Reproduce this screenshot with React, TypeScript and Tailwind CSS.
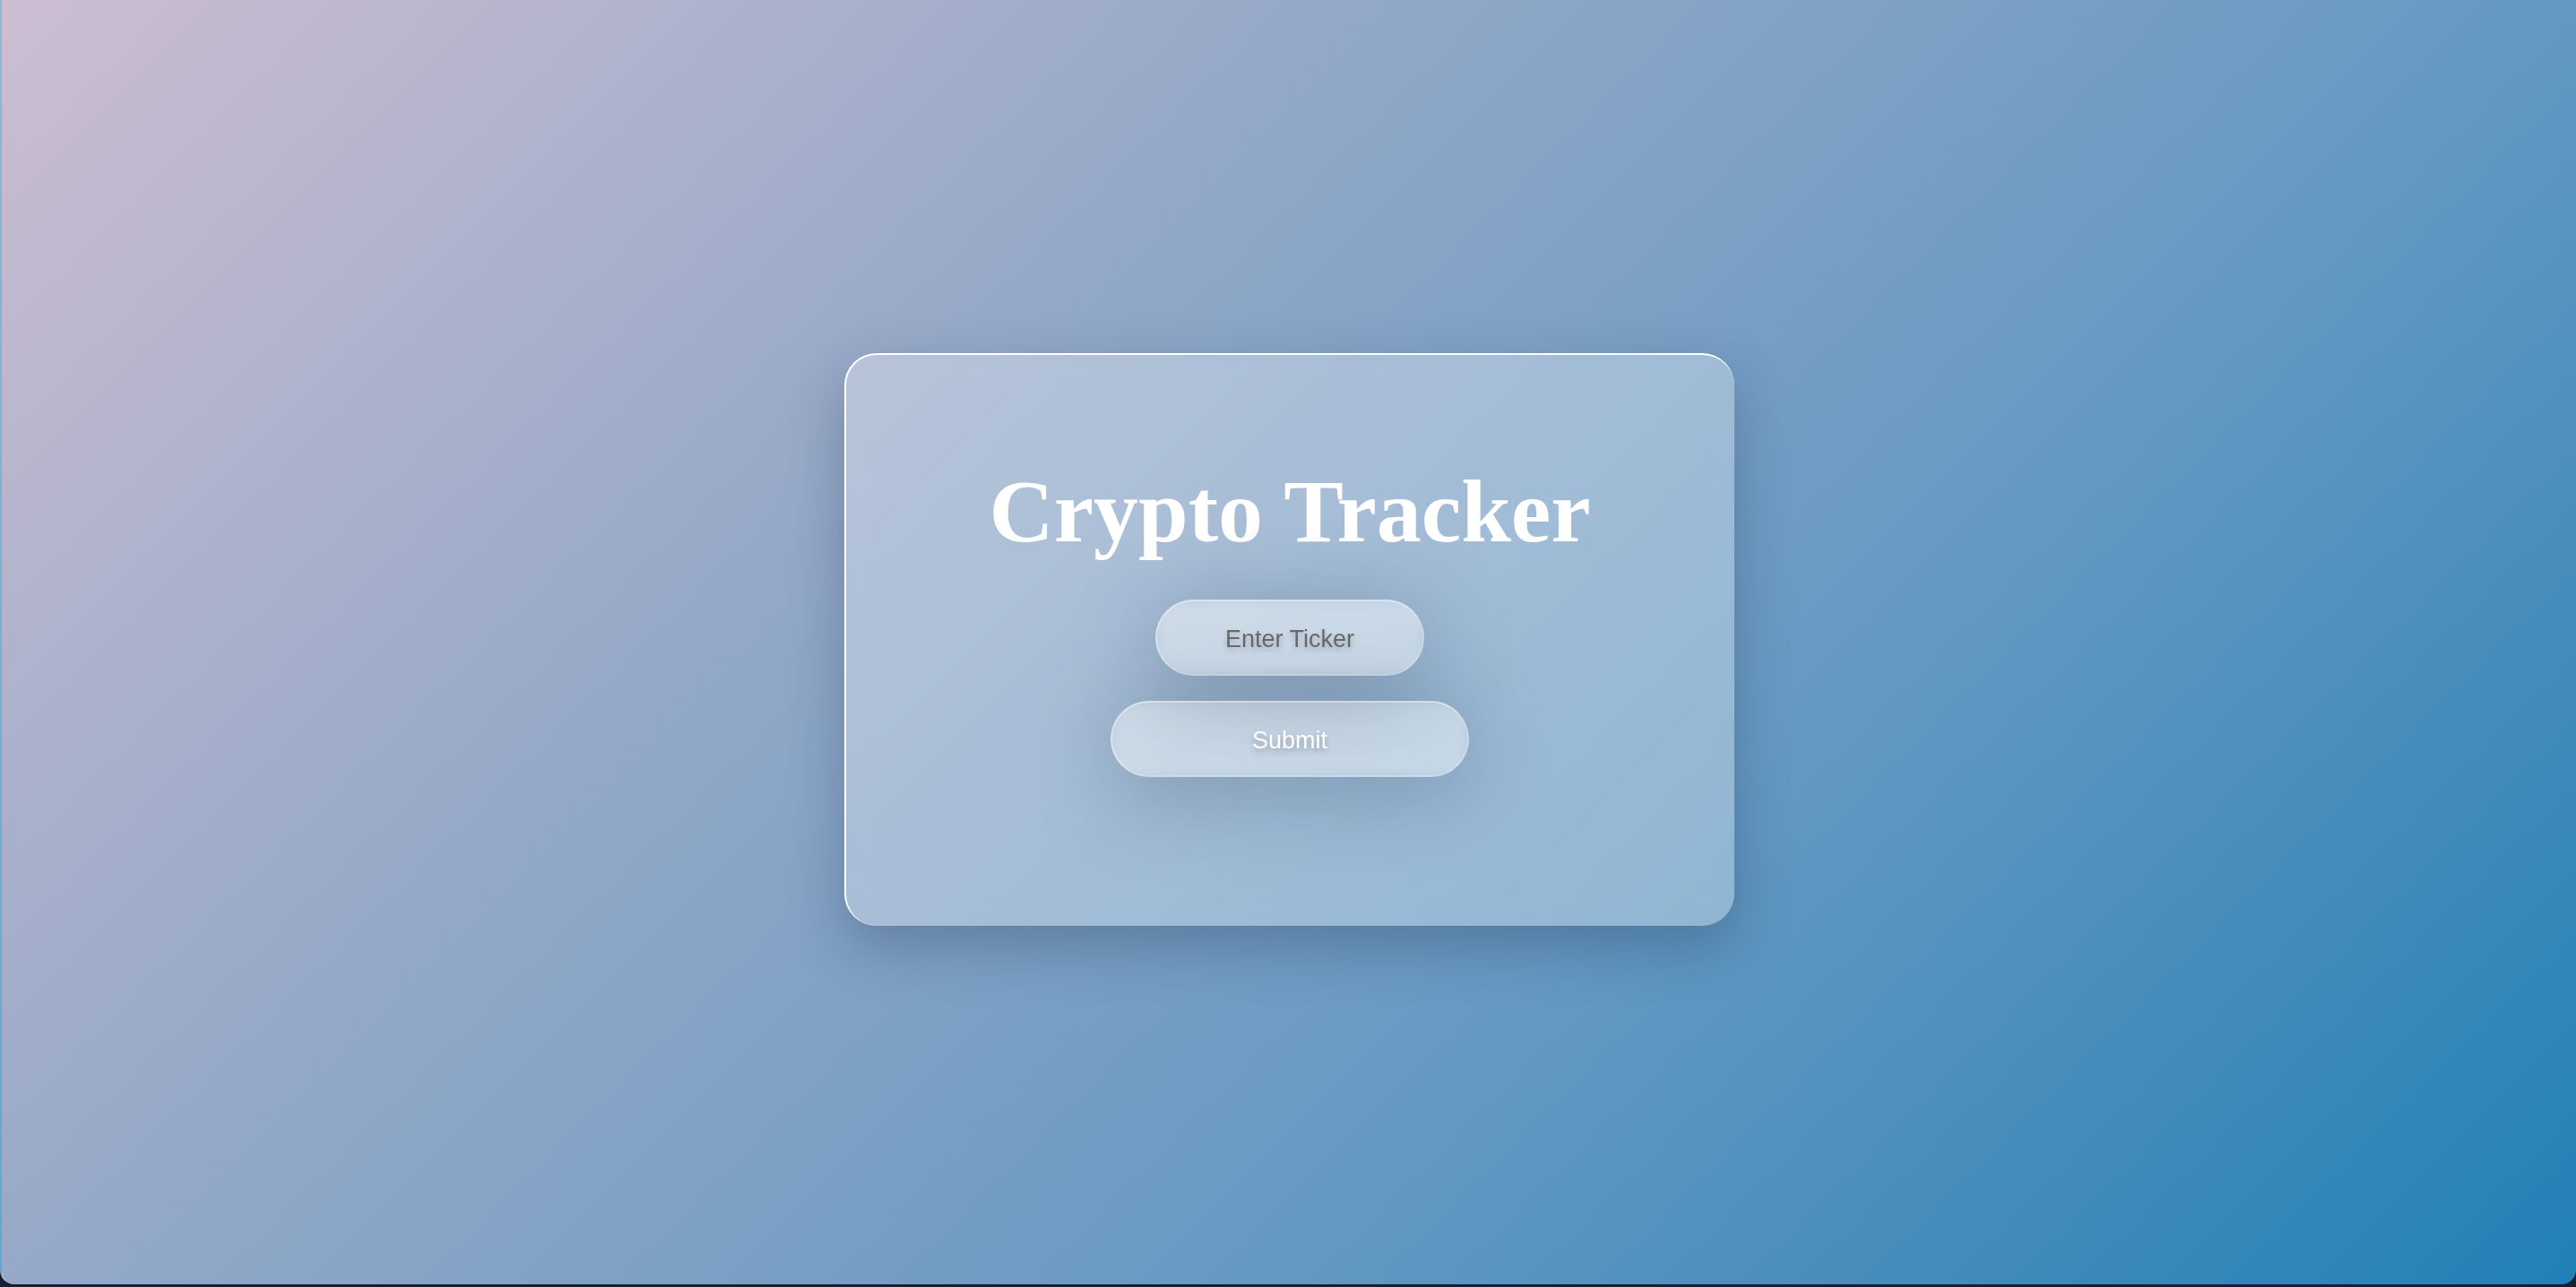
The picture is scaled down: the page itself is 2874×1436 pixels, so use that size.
import React from 'react';

export default function App() {
  const [ticker, setTicker] = React.useState('');

  return (
    <div className="flex h-screen w-full flex-col bg-[#1b1d33] pb-[3px]">
      <div className="flex flex-1 items-center justify-center rounded-b-[16px] border-l-2 border-white/30 bg-[linear-gradient(135deg,#cdbdd1_0%,#93a8c7_35%,#6699c2_65%,#2280b6_100%)] pb-[6px]">
        <div className="flex h-[639px] w-[993px] flex-col items-center rounded-[36px] border-t-2 border-l-2 border-white bg-white/30 pt-[125px] shadow-[0_24px_60px_rgba(20,40,70,0.28)] backdrop-blur-md">
          <h1 className="mb-[48px] h-[100px] text-[100px] font-bold leading-[100px] text-white [font-family:'Liberation_Serif','Times_New_Roman',serif]">
            Crypto Tracker
          </h1>
          <input
            value={ticker}
            onChange={e => setTicker(e.target.value)}
            placeholder="Enter Ticker"
            className="h-[85px] w-[300px] rounded-full border-2 border-white/20 border-t-white/40 border-l-white/35 bg-white/20 pt-[4px] text-center text-[27px] text-[#5e5e5e] outline-none shadow-[0_14px_100px_rgba(30,50,80,0.3)] backdrop-blur-sm [font-family:'Liberation_Sans',Arial,sans-serif] [text-shadow:0_4px_6px_rgba(0,0,0,0.22)] placeholder:text-[#6a6a6a]"
          />
          <button className="mt-[28px] h-[85px] w-[400px] rounded-full border-2 border-white/20 border-t-white/40 border-l-white/35 bg-white/20 pt-[4px] text-[27px] text-white shadow-[0_14px_100px_rgba(30,50,80,0.3)] backdrop-blur-sm [font-family:'Liberation_Sans',Arial,sans-serif] [text-shadow:0_4px_6px_rgba(0,0,0,0.25)]">
            Submit
          </button>
        </div>
      </div>
    </div>
  );
}
